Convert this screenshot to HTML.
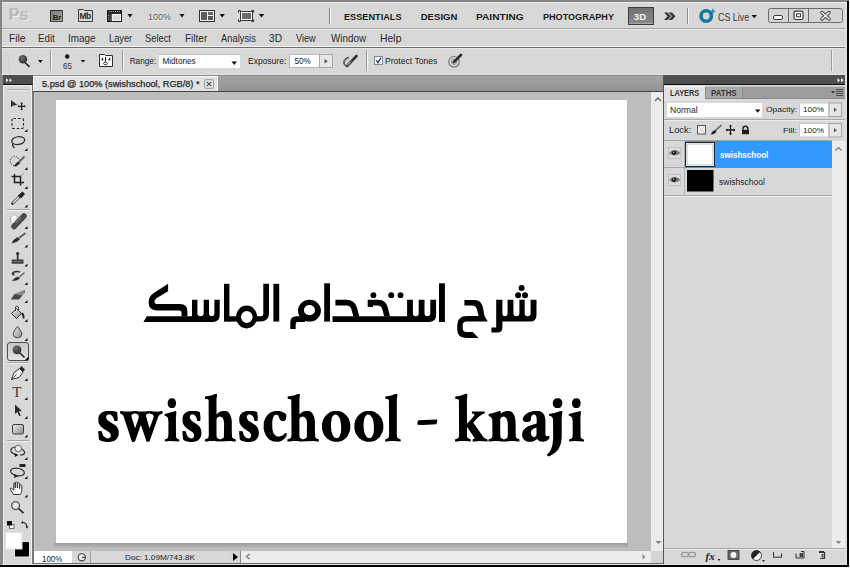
<!DOCTYPE html>
<html><head><meta charset="utf-8">
<style>
*{margin:0;padding:0;box-sizing:border-box}
html,body{width:850px;height:568px;overflow:hidden;background:#fff}
body{position:relative;font-family:"Liberation Sans",sans-serif;color:#222}
.a{position:absolute}
.t{position:absolute;white-space:nowrap;line-height:1}
.en .t{transform-origin:0 0}
</style></head><body>
<!-- frame -->
<div class="a" style="left:0;top:0;width:849px;height:567px;background:#868686"></div>
<!-- app bar -->
<div class="a" style="left:2px;top:2px;width:845px;height:26px;background:#d8d8d8;border-top:1px solid #ececec"></div>
<div class="a" style="left:2px;top:28px;width:845px;height:1px;background:#a4a4a4"></div>
<!-- menu bar -->
<div class="a" style="left:2px;top:29px;width:845px;height:18px;background:#d8d8d8;border-top:1px solid #ececec;border-bottom:1px solid #f4f4f4"></div>
<div class="a" style="left:2px;top:47px;width:845px;height:1px;background:#6e6e6e"></div>
<!-- options bar -->
<div class="a" style="left:2px;top:48px;width:845px;height:27px;background:#d8d8d8;border-top:1px solid #e6e6e6;border-bottom:1px solid #e4e4e4"></div>
<div class="a" style="left:2px;top:75px;width:845px;height:1px;background:#9a9a9a"></div>

<!-- toolbar -->
<div class="a" style="left:3px;top:75px;width:30px;height:10px;background:#4e4e4e;border-bottom:1px solid #111"></div>
<div class="a" style="left:3px;top:85px;width:29px;height:480px;background:#d8d8d8;border-left:1px solid #ececec;border-top:1px solid #f0f0f0"></div>
<div class="a" style="left:31px;top:86px;width:1px;height:478px;background:#f2f2f2"></div>
<div class="a" style="left:32px;top:85px;width:2px;height:480px;background:#787878"></div>
<div class="a" style="left:34px;top:92px;width:1px;height:459px;background:#cacaca"></div>

<!-- document window -->
<div class="a" style="left:33px;top:75px;width:630px;height:17px;background:linear-gradient(#a4a4a4,#939393);border-top:1px solid #8a8a8a;border-bottom:1px solid #444"></div>
<div class="a" style="left:33px;top:76px;width:185px;height:15px;background:#e2e2e2;border-top:1px solid #fafafa;border-left:1px solid #fafafa;border-right:1px solid #fafafa"></div>
<div class="a" style="left:35px;top:92px;width:616px;height:459px;background:#bdbdbd"></div>
<div class="a" style="left:56px;top:100px;width:571.4px;height:442.5px;background:#fff"></div>
<div class="a" style="left:54px;top:542.5px;width:574px;height:5px;background:linear-gradient(#9a9a9a,#bababa)"></div>
<div class="a" style="left:651px;top:92px;width:12px;height:459px;background:#ececec"></div>
<div class="a" style="left:663px;top:75px;width:1px;height:490px;background:#555"></div>
<!-- status bar -->
<div class="a" style="left:34px;top:551px;width:629px;height:13px;background:#d8d8d8"></div>
<div class="a" style="left:34px;top:551px;width:38px;height:13px;background:#fff"></div>
<div class="a" style="left:241px;top:551px;width:410px;height:13px;background:#ececec"></div>

<!-- right panel -->
<div class="a" style="left:664px;top:75px;width:183px;height:10px;background:#4e4e4e;border-bottom:1px solid #111"></div>
<div class="a" style="left:664px;top:85px;width:183px;height:480px;background:#d8d8d8"></div>
<div class="a" style="left:664px;top:86px;width:181px;height:13px;background:#9e9e9e"></div>
<div class="a" style="left:664px;top:86px;width:41px;height:13px;background:#e2e2e2"></div>
<div class="a" style="left:705px;top:86px;width:37px;height:13px;background:#a9a9a9;border-left:1px solid #888;border-right:1px solid #888"></div>
<div class="a" style="left:845px;top:2px;width:2px;height:563px;background:#dedede"></div>
<div class="a" style="left:847px;top:1px;width:1.6px;height:566px;background:#000"></div>
<div class="a" style="left:34px;top:563px;width:629px;height:1px;background:#6a6a6a"></div>
<div class="a" style="left:2px;top:564px;width:845px;height:1px;background:#e4e4e4"></div>
<div class="a" style="left:0;top:565px;width:848.6px;height:2px;background:#000"></div>
<!-- app bar icons -->
<div class="t" style="left:9px;top:7px;font-size:16px;font-weight:700;color:#bcbcbc;text-shadow:1px 1px 0 #f0f0f0,-0.5px -0.5px 0 #a8a8a8;letter-spacing:0px">Ps</div>
<svg class="a" style="left:0;top:0" width="850" height="30" viewBox="0 0 850 30">
 <defs>
  <linearGradient id="gbr" x1="0" y1="0" x2="1" y2="1"><stop offset="0" stop-color="#7c7c7c"/><stop offset="1" stop-color="#a4a4a4"/></linearGradient>
  <linearGradient id="g3d" x1="0" y1="0" x2="0" y2="1"><stop offset="0" stop-color="#6f6f6f"/><stop offset="1" stop-color="#8c8c8c"/></linearGradient>
 </defs>
 <!-- Br -->
 <rect x="50.5" y="10.5" width="12" height="11" fill="url(#gbr)" stroke="#4a4a4a"/>
 <path d="M50.5 21.5V10.5H62.5" fill="none" stroke="#2e2e2e"/>
 <text x="52.6" y="19.6" font-family="Liberation Sans" font-weight="700" font-size="8" fill="#1c1c1c">Br</text>
 <!-- Mb folder -->
 <path d="M78.5 21.5V9.5H83.5L84.5 10.5H92.5V21.5Z" fill="#d9d9d9" stroke="#3e3e3e"/>
 <text x="79.6" y="19.4" font-family="Liberation Sans" font-weight="700" font-size="8.5" fill="#2a2a2a" letter-spacing="-0.6">Mb</text>
 <!-- film / screen icon -->
 <rect x="107.5" y="10.5" width="14" height="11" fill="#2a2a2a" stroke="#1e1e1e"/>
 <rect x="112" y="14" width="9" height="7" fill="#f2f2f2"/>
 <rect x="113" y="15" width="7" height="5" fill="#d8d8d8"/>
 <g fill="#9a9a9a"><rect x="109" y="11" width="1" height="1"/><rect x="111" y="11" width="1" height="1"/><rect x="113" y="11" width="1" height="1"/><rect x="115" y="11" width="1" height="1"/><rect x="117" y="11" width="1" height="1"/><rect x="119" y="11" width="1" height="1"/><rect x="108" y="15" width="1" height="1"/><rect x="108" y="17" width="1" height="1"/><rect x="108" y="19" width="1" height="1"/></g>
 <rect x="110" y="14" width="2" height="7" fill="#555"/>
 <!-- dropdown arrows -->
 <g fill="#111">
  <path d="M127.5 14H132.5L130 17.5Z"/>
  <path d="M179.5 14H184.5L182 17.5Z"/>
  <path d="M219.5 14H225L222.2 17.5Z"/>
  <path d="M258.7 14H264.2L261.5 17.5Z"/>
  <path d="M751.5 15H757L754.2 18.2Z"/>
 </g>
 <!-- arrange docs icon -->
 <rect x="199.5" y="10.5" width="15" height="11" fill="#f0f0f0" stroke="#2c2c2c"/>
 <rect x="201" y="12" width="6" height="8" fill="#5e5e5e"/>
 <rect x="208" y="12" width="5" height="3" fill="#6a6a6a"/>
 <rect x="208" y="16" width="5" height="4" fill="#5a5a5a"/>
 <!-- screen mode icon -->
 <path d="M238.5 12.5V10.5H240.5M251.5 10.5H253.5V12.5M253.5 19.5V21.5H251.5M240.5 21.5H238.5V19.5" fill="none" stroke="#2a2a2a"/>
 <rect x="240.5" y="11.5" width="12" height="9" fill="#fafafa" stroke="#3a3a3a"/>
 <rect x="242" y="13" width="9" height="6" fill="#6c6c6c"/>
 <!-- separators -->
 <rect x="329" y="8" width="1" height="16" fill="#8a8a8a"/><rect x="330" y="8" width="1" height="16" fill="#f4f4f4"/>
 <rect x="687" y="8" width="1" height="16" fill="#8a8a8a"/><rect x="688" y="8" width="1" height="16" fill="#f4f4f4"/>
 <!-- 3D button -->
 <rect x="628.5" y="7.5" width="25" height="17" fill="url(#g3d)" stroke="#3c3c3c"/>
 <rect x="629" y="23" width="24" height="1" fill="#a8a8a8"/>
 <!-- >> -->
 <path d="M664 12.5L667.5 12.5L671 16.2L667.5 20L664 20L667.5 16.2Z M668.5 12.5L672 12.5L675.5 16.2L672 20L668.5 20L672 16.2Z" fill="#3a3a3a"/>
 <!-- CS live icon -->
 <circle cx="706.2" cy="16" r="5.2" fill="none" stroke="#17789e" stroke-width="3.6"/>
 <path d="M712.8 8.8V13.8M710.3 11.3H715.3" stroke="#2a80a8" stroke-width="1.3"/>
 <!-- window buttons -->
 <rect x="768.5" y="8.5" width="74" height="14" rx="2" fill="#d4d4d4" stroke="#6a6a6a"/>
 <rect x="788" y="9" width="1" height="13" fill="#6a6a6a"/>
 <rect x="808" y="9" width="1" height="13" fill="#6a6a6a"/>
 <rect x="773.5" y="15.5" width="9" height="4" rx="1.5" fill="#fafafa" stroke="#3a3a3a"/>
 <rect x="794" y="11.2" width="9" height="8.3" rx="1.5" fill="#fafafa" stroke="#3a3a3a" stroke-width="1.2"/>
 <rect x="796.5" y="13.8" width="4" height="3" fill="#fafafa" stroke="#3a3a3a"/>
 <path d="M822 12.5L829 19M829 12.5L822 19" stroke="#3a3a3a" stroke-width="3.4" stroke-linecap="round"/>
 <path d="M822 12.5L829 19M829 12.5L822 19" stroke="#fafafa" stroke-width="1.6" stroke-linecap="round"/>
</svg>
<!-- options bar -->
<svg class="a" style="left:0;top:46px" width="850" height="32" viewBox="0 46 850 32">
 <defs>
  <radialGradient id="gdot"><stop offset="0" stop-color="#000"/><stop offset="0.6" stop-color="#222"/><stop offset="1" stop-color="#222" stop-opacity="0"/></radialGradient>
  <radialGradient id="gball" cx="0.4" cy="0.35" r="0.7"><stop offset="0" stop-color="#6a6a6a"/><stop offset="1" stop-color="#2e2e2e"/></radialGradient>
 </defs>
 <!-- gripper -->
 <g fill="#c2c2c2"><rect x="6" y="52" width="1" height="1"/><rect x="6" y="55" width="1" height="1"/><rect x="6" y="58" width="1" height="1"/><rect x="6" y="61" width="1" height="1"/><rect x="6" y="64" width="1" height="1"/><rect x="6" y="67" width="1" height="1"/><rect x="8" y="53" width="1" height="1"/><rect x="8" y="56" width="1" height="1"/><rect x="8" y="59" width="1" height="1"/><rect x="8" y="62" width="1" height="1"/><rect x="8" y="65" width="1" height="1"/><rect x="8" y="68" width="1" height="1"/></g>
 <!-- dodge tool icon -->
 <path d="M25 62.5L29.5 66.8" stroke="#1e1e1e" stroke-width="1.6"/>
 <circle cx="22.9" cy="59.3" r="4.3" fill="url(#gball)"/>
 <g fill="#111">
  <path d="M38 60H42.8L40.4 63Z"/>
  <path d="M80.7 60H85.2L83 62.6Z"/>
 </g>
 <!-- separators -->
 <rect x="50" y="50" width="1" height="21" fill="#9c9c9c"/><rect x="51" y="50" width="1" height="21" fill="#f2f2f2"/>
 <rect x="122" y="50" width="1" height="21" fill="#9c9c9c"/><rect x="123" y="50" width="1" height="21" fill="#f2f2f2"/>
 <rect x="366" y="50" width="1" height="21" fill="#9c9c9c"/><rect x="367" y="50" width="1" height="21" fill="#f2f2f2"/>
 <rect x="831" y="50" width="1" height="21" fill="#9c9c9c"/><rect x="832" y="50" width="1" height="21" fill="#f2f2f2"/>
 <!-- brush dot -->
 <circle cx="67.2" cy="56.5" r="2.8" fill="url(#gdot)"/>
 <!-- brush panel icon -->
 <path d="M99.5 66.5V54.5H104.5L105.5 55.5H112.5V66.5Z" fill="#fbfbfb" stroke="#2e2e2e"/>
 <path d="M105.5 57V62" stroke="#222" stroke-width="1"/>
 <ellipse cx="105.5" cy="63.5" rx="1.9" ry="1.2" fill="#fff" stroke="#222" stroke-width="0.9"/>
 <path d="M101.2 60.2L102.4 57.2L103.6 60.2Z M108.2 60.2L109.4 57.2L110.6 60.2Z" fill="#1a1a1a"/>
 <!-- range dropdown -->
 <rect x="159" y="55" width="81" height="13" fill="#fff"/>
 <rect x="159" y="54" width="81" height="1" fill="#bdbdbd"/>
 <path d="M231.5 61.5H237L234.2 65Z" fill="#111"/>
 <!-- exposure field -->
 <rect x="289.5" y="54.5" width="30" height="13" fill="#fff" stroke="#b8b8b8"/>
 <rect x="319.5" y="54.5" width="13" height="13" fill="#e8e8e8" stroke="#a8a8a8"/>
 <path d="M324.5 59V63.5L327.8 61.2Z" fill="#4e5566"/>
 <!-- airbrush icon -->
 <path d="M349 57.5Q343.5 59 344 63.5Q345 66 347.5 66" fill="none" stroke="#6a6a6a" stroke-width="2"/>
 <path d="M347 66L356.5 56" stroke="#333" stroke-width="2.6" stroke-linecap="round"/>
 <path d="M347 65.5L351 61.5" stroke="#f4f4f4" stroke-width="0.9"/>
 <!-- checkbox -->
 <rect x="374.5" y="56.5" width="8" height="8" fill="#f6f6f6" stroke="#8a8a8a"/>
 <path d="M376.2 60.2L378 62.8L381 57.6" fill="none" stroke="#2a3a6a" stroke-width="1.3"/>
 <!-- protect tones / pressure icon -->
 <circle cx="454" cy="61.8" r="5.3" fill="none" stroke="#777" stroke-width="1.2"/>
 <circle cx="454" cy="61.8" r="2.6" fill="none" stroke="#888" stroke-width="1"/>
 <path d="M453.8 62.2L461 55" stroke="#2a2a2a" stroke-width="2.6" stroke-linecap="round"/>
</svg>
<!-- toolbar icons -->
<svg class="a" style="left:0;top:75px" width="34" height="492" viewBox="0 75 34 492">
 <defs>
  <linearGradient id="gdk" x1="0" y1="0" x2="1" y2="1"><stop offset="0" stop-color="#7a7a7a"/><stop offset="1" stop-color="#2e2e2e"/></linearGradient>
  <linearGradient id="glt" x1="0" y1="0" x2="1" y2="1"><stop offset="0" stop-color="#f0f0f0"/><stop offset="1" stop-color="#8a8a8a"/></linearGradient>
  <linearGradient id="gsel" x1="0" y1="0" x2="0" y2="1"><stop offset="0" stop-color="#c4c4c4"/><stop offset="1" stop-color="#e6e6e6"/></linearGradient>
 </defs>
 <!-- header arrows -->
 <path d="M6 78V82.5L8.5 80.2Z M9.5 78V82.5L12 80.2Z" fill="#e6e6e6"/>
 <!-- gripper -->
 <g fill="#b0b0b0"><rect x="7" y="89" width="22" height="1"/></g>
 <g fill="#e8e8e8"><rect x="7" y="90" width="22" height="1"/></g>
 <!-- separators -->
 <g fill="#a6a6a6"><rect x="7" y="209" width="22" height="1"/><rect x="7" y="362" width="22" height="1"/><rect x="7" y="440" width="22" height="1"/></g>
 <g fill="#efefef"><rect x="7" y="210" width="22" height="1"/><rect x="7" y="363" width="22" height="1"/><rect x="7" y="441" width="22" height="1"/></g>
 <!-- small corner triangles -->
 <g fill="#111">
  <path d="M24.5 132H27.5V129Z"/><path d="M24.5 151H27.5V148Z"/><path d="M24.5 170H27.5V167Z"/><path d="M24.5 189H27.5V186Z"/><path d="M24.5 207.5H27.5V204.5Z"/>
  <path d="M24.5 229H27.5V226Z"/><path d="M24.5 247.5H27.5V244.5Z"/><path d="M24.5 266.5H27.5V263.5Z"/><path d="M24.5 285H27.5V282Z"/><path d="M24.5 303H27.5V300Z"/><path d="M24.5 322H27.5V319Z"/><path d="M24.5 341H27.5V338Z"/>
  <path d="M24.5 381H27.5V378Z"/><path d="M24.5 400H27.5V397Z"/><path d="M24.5 419H27.5V416Z"/><path d="M24.5 437.5H27.5V434.5Z"/>
  <path d="M24.5 460H27.5V457Z"/><path d="M24.5 479H27.5V476Z"/><path d="M24.5 497.5H27.5V494.5Z"/>
 </g>
 <!-- move -->
 <path d="M11 100V107.5L13 105.5L17.5 105Z" fill="#333"/>
 <path d="M18 106.3H25.2M21.6 102.7V110" stroke="#222" stroke-width="1.3"/>
 <path d="M17.5 106.3L19 105V107.6Z M25.7 106.3L24.2 105V107.6Z M21.6 102.2L20.3 103.7H22.9Z M21.6 110.5L20.3 109H22.9Z" fill="#222"/>
 <!-- marquee -->
 <rect x="12" y="118.5" width="11.5" height="10" rx="1.5" fill="none" stroke="#222" stroke-width="1.1" stroke-dasharray="2.5 2"/>
 <!-- lasso -->
 <ellipse cx="18.2" cy="140.6" rx="6.5" ry="3.9" fill="none" stroke="#2a2a2a" stroke-width="1.2" transform="rotate(-8 18.2 140.6)"/>
 <path d="M12.8 143.5Q12 146 14.5 148" fill="none" stroke="#2a2a2a" stroke-width="1.3"/>
 <!-- quick selection -->
 <circle cx="14.8" cy="161" r="4.6" fill="none" stroke="#333" stroke-width="1" stroke-dasharray="1.3 1.2"/>
 <path d="M13.5 166L18 161.5L20.5 163L16 166.5Z" fill="#2a2a2a"/>
 <path d="M19 162L24.5 156.5" stroke="#666" stroke-width="2"/>
 <!-- crop -->
 <path d="M14.5 174V182.5H24M11.5 176.5H20.5V185.5" fill="none" stroke="#1e1e1e" stroke-width="1.5"/>
 <path d="M20.5 176.5L23.5 173.5" stroke="#777" stroke-width="0.8"/>
 <!-- eyedropper -->
 <path d="M12.5 203.5L19.5 196.5" stroke="#333" stroke-width="2.8" stroke-linecap="round"/>
 <path d="M13 203L19 197" stroke="#f4f4f4" stroke-width="1.2"/>
 <path d="M18 195.5L22.5 191.5L25 194L21 198.5Z" fill="#222"/>
 <!-- healing -->
 <path d="M10.5 219Q11 214 15 215L18 217L14 224Q10.5 223 10.5 219Z" fill="#f6f6f6" stroke="#555" stroke-width="0.7" stroke-dasharray="1 1"/>
 <path d="M14 226.5L24 216" stroke="#4a4a4a" stroke-width="5.5" stroke-linecap="round"/>
 <path d="M15.5 223L21 217.5" stroke="#7a7a7a" stroke-width="1.2"/>
 <!-- brush -->
 <path d="M11.5 243.5Q13.5 239 17.5 237L20 239.5Q17 242.5 11.5 243.5Z" fill="#2e2e2e"/>
 <path d="M19 238L25.5 233" stroke="#555" stroke-width="1.6"/>
 <!-- stamp -->
 <circle cx="17.6" cy="253.6" r="1.7" fill="#3a3a3a"/>
 <rect x="16.8" y="254.5" width="1.8" height="5.5" fill="#3a3a3a"/>
 <rect x="11.7" y="259.5" width="11.8" height="4.2" fill="#3a3a3a"/>
 <rect x="12.5" y="261" width="10" height="1" fill="#777"/>
 <!-- history brush -->
 <path d="M12 273.5Q15 270.5 20 272" fill="none" stroke="#333" stroke-width="1.4"/>
 <path d="M11.5 275L14 272L14.5 275.5Z" fill="#333"/>
 <path d="M12 281Q14 277.5 18 276.5L20 278.5Q17 281 12 281Z" fill="#2e2e2e"/>
 <path d="M19.5 277L24.5 272.5" stroke="#666" stroke-width="1.4"/>
 <!-- eraser -->
 <path d="M11 299.5L14.5 294L25 289.5L22.5 295.5Z" fill="#8c8c8c"/>
 <path d="M11 299.5L14.5 294L22.5 295.5L19 299.5Z" fill="#4a4a4a"/>
 <path d="M22.5 295.5L25 289.5L25 292Z" fill="#555"/>
 <!-- paint bucket -->
 <path d="M11.5 313.5L16.5 308.5L21.5 313.5L16.5 318.5Z" fill="url(#glt)" stroke="#3a3a3a" stroke-width="1"/>
 <path d="M15.5 311V307Q17 305 18.5 307V311" fill="none" stroke="#444" stroke-width="1"/>
 <path d="M21.5 313.5Q24 314 23.5 318.5" fill="none" stroke="#222" stroke-width="1.8"/>
 <!-- blur drop -->
 <path d="M17.5 326.5Q13 332 13.2 334.5Q13.5 337.8 17.5 337.8Q21.5 337.8 21.8 334.5Q22 332 17.5 326.5Z" fill="url(#glt)" stroke="#3c3c3c" stroke-width="0.9"/>
 <!-- selected button -->
 <rect x="7.5" y="342.5" width="21" height="18" rx="2.5" fill="url(#gsel)" stroke="#4e4e4e"/>
 <path d="M19.5 352.5L24.5 357.5" stroke="#1e1e1e" stroke-width="1.6"/>
 <circle cx="17" cy="349.8" r="4.4" fill="url(#gball)"/>
 <path d="M24.5 360.5H28.5V356.5Z" fill="#111"/>
 <!-- pen -->
 <path d="M11.5 379.5L14 372.5L19.5 368.5L23 372L19 377.5Z" fill="#f4f4f4" stroke="#333" stroke-width="1"/>
 <path d="M19.5 368.5L21.5 366L25 369.5L23 372Z" fill="#2a2a2a"/>
 <path d="M11.5 379.5L16.5 374.5" stroke="#333" stroke-width="0.8"/>
 <!-- type -->
 <text x="12.2" y="397" font-family="Liberation Serif" font-size="15" fill="#3a3a3a">T</text>
 <!-- path selection -->
 <path d="M15 404.5V414L17.3 412L19.3 416.2L20.8 415.4L18.9 411.3L22 411Z" fill="#2a2a2a"/>
 <!-- shape -->
 <rect x="12.5" y="424.5" width="11" height="9.5" rx="1.5" fill="url(#glt)" stroke="#3c3c3c"/>
 <!-- 3D rotate -->
 <circle cx="18.3" cy="448.5" r="3.2" fill="#f0f0f0" stroke="#555" stroke-width="0.9"/>
 <path d="M15 447Q10 448 11 451.5Q13 454.5 17 455M20 455Q25 455 24.5 452Q24 450 21.5 449" fill="none" stroke="#2e2e2e" stroke-width="1.2"/>
 <path d="M14.5 453L18.5 455L15 457Z" fill="#1e1e1e"/>
 <!-- 3D orbit cam -->
 <rect x="19.5" y="464" width="6" height="3" fill="#222"/>
 <ellipse cx="17.5" cy="472" rx="7" ry="3.8" fill="none" stroke="#2e2e2e" stroke-width="1.2" transform="rotate(10 17.5 472)"/>
 <path d="M14 474L18.5 476L14.5 478Z" fill="#1e1e1e"/>
 <!-- hand -->
 <path d="M13.5 494.5L10.5 489.5Q10 488 11.5 488.2L13.8 490V484Q14 482.5 15.2 483V488V482.5Q16.2 481.2 17.4 482.5V488V483Q18.6 482 19.6 483.3V488.5V485.2Q20.8 484.2 21.8 485.5V490.5Q21.5 493 20.2 494.5Z" fill="#fafafa" stroke="#333" stroke-width="1"/>
 <!-- zoom -->
 <circle cx="15.6" cy="505.6" r="3.9" fill="#e6e6e6" stroke="#333" stroke-width="1.1"/>
 <path d="M18.5 508.5L23.5 513.2" stroke="#222" stroke-width="1.6"/>
 <!-- default colors -->
 <rect x="9.5" y="524.5" width="4.5" height="4" fill="#fff" stroke="#555" stroke-width="0.8"/>
 <rect x="7" y="521" width="5" height="4.5" fill="#111"/>
 <!-- swap -->
 <path d="M22.5 522.5Q26.5 522.5 27 527" fill="none" stroke="#222" stroke-width="1.1"/>
 <path d="M21 522.5L23 521V524Z M27 528.8L25.5 526.5H28.5Z" fill="#222"/>
 <!-- bg/fg colors -->
 <rect x="14.5" y="541.5" width="15" height="15.5" fill="#000" stroke="#e8e8e8"/>
 <rect x="5.5" y="532.5" width="16.5" height="16.5" fill="#fff" stroke="#e0e0e0"/>
</svg>
<!-- document widgets -->
<svg class="a" style="left:30px;top:74px" width="636" height="494" viewBox="30 74 636 494">
 <!-- tab close -->
 <rect x="204.5" y="79.5" width="9" height="9" rx="1.5" fill="#dedede" stroke="#a6a6a6"/>
 <path d="M206.8 81.8L211.2 86.2M211.2 81.8L206.8 86.2" stroke="#555" stroke-width="1.1"/>
 <!-- v scrollbar arrows -->
 <path d="M655 101L658 98L661 101" fill="none" stroke="#5e5e5e" stroke-width="1.3"/>
 <path d="M655.5 541H661.5L658.5 544Z" fill="#7a7a7a"/>
 <!-- status icon button -->
 <rect x="72" y="551" width="18" height="12" fill="#d8d8d8"/>
 <rect x="90" y="551" width="1" height="12" fill="#a0a0a0"/>
 <circle cx="81.8" cy="557.3" r="3.6" fill="#f0f0f0" stroke="#444" stroke-width="1.1"/>
 <path d="M81.8 557.3H85.5" stroke="#333" stroke-width="1.1"/>
 <!-- status play arrow -->
 <rect x="229.5" y="551" width="11" height="12" fill="#d6d6d6"/>
 <rect x="240" y="551" width="1" height="12" fill="#8a8a8a"/>
 <path d="M233 553V561L238 557Z" fill="#000"/>
 <!-- h scrollbar left arrow -->
 <path d="M249.5 554L246.5 556.5L249.5 559" fill="none" stroke="#777" stroke-width="1.2"/>
 <path d="M642.5 554V559.5L645.5 556.7Z" fill="#8a8a8a"/>
 <rect x="651" y="551" width="12" height="12" fill="#d4d4d4"/>
 <!-- status bottom lines -->
</svg>
<!-- right panel widgets -->
<svg class="a" style="left:662px;top:74px" width="188" height="494" viewBox="662 74 188 494">
 <defs>
  <linearGradient id="geye" x1="0" y1="0" x2="0" y2="1"><stop offset="0" stop-color="#5a5a5a"/><stop offset="1" stop-color="#9a9a9a"/></linearGradient>
 </defs>
 <!-- header arrows -->
 <path d="M837.5 78V82.5L840.2 80.2Z M841 78V82.5L843.7 80.2Z" fill="#e8e8e8"/>
 <!-- tab bar -->
 <rect x="664" y="86" width="181" height="1" fill="#c4c4c4"/>
 <rect x="664" y="98" width="181" height="1" fill="#8a8a8a"/>
 <rect x="664" y="86" width="41" height="15" fill="#e2e2e2"/>
 <rect x="664" y="86" width="41" height="1" fill="#f6f6f6"/>
 <rect x="705" y="87" width="1" height="11" fill="#8c8c8c"/>
 <rect x="742" y="87" width="1" height="11" fill="#8c8c8c"/>
 <rect x="706" y="87" width="36" height="11" fill="#a9a9a9"/>
 <!-- panel menu icon -->
 <path d="M830.8 91H835.2L833 93.5Z" fill="#333"/>
 <g fill="#4a4a4a"><rect x="836" y="89" width="7" height="1"/><rect x="836" y="91" width="7" height="1"/><rect x="836" y="93" width="7" height="1"/><rect x="836" y="95" width="7" height="1"/></g>
 <!-- blend dropdown -->
 <rect x="667" y="103" width="95" height="14" fill="#fff"/>
 <path d="M755 109.5H760.5L757.7 112.8Z" fill="#111"/>
 <!-- opacity field -->
 <rect x="799.5" y="103" width="29.5" height="13.5" fill="#fff" stroke="#c8c8c8"/>
 <rect x="829" y="103" width="12.5" height="13.5" fill="#e6e6e6" stroke="#a4a4a4"/>
 <path d="M834 107.5V112L837 109.8Z" fill="#555a66"/>
 <!-- separator -->
 <rect x="664" y="119" width="181" height="1" fill="#a9a9a9"/>
 <rect x="664" y="120" width="181" height="1" fill="#ececec"/>
 <!-- lock icons -->
 <rect x="697.5" y="125.5" width="8" height="8.5" fill="#f4f4f4" stroke="#555"/>
 <path d="M699 127L704 132.5M704 127L699 132.5" stroke="#c8c8c8" stroke-width="1"/>
 <path d="M711 134.5Q711.5 131 715 130L716.5 131.5Q715 134.5 711 134.5Z" fill="#222"/>
 <path d="M715.5 130.5L721.5 125" stroke="#555" stroke-width="1.4"/>
 <path d="M726 130H735M730.5 125.2V134.8" stroke="#1e1e1e" stroke-width="1.3"/>
 <path d="M725.5 130L727.5 128.5V131.5Z M735.5 130L733.5 128.5V131.5Z M730.5 124.5L729 126.5H732Z M730.5 135.3L729 133.3H732Z" fill="#1e1e1e"/>
 <path d="M743 130V128.5Q743 126.3 745.4 126.3Q747.8 126.3 747.8 128.5V130" fill="none" stroke="#222" stroke-width="1.4"/>
 <rect x="742" y="129.8" width="7" height="4.4" fill="#1e1e1e"/>
 <!-- fill field -->
 <rect x="799.5" y="123.5" width="29.5" height="13.5" fill="#fff" stroke="#c8c8c8"/>
 <rect x="829" y="123.5" width="12.5" height="13.5" fill="#e6e6e6" stroke="#a4a4a4"/>
 <path d="M834 128V132.5L837 130.3Z" fill="#555a66"/>
 <!-- layers list -->
 <rect x="664" y="140" width="168" height="1" fill="#a4a4a4"/>
 <rect x="685" y="141" width="147" height="27" fill="#3199fb"/>
 <rect x="684" y="141" width="1" height="54" fill="#b0b0b0"/>
 <rect x="664" y="167" width="20" height="1" fill="#a8a8a8"/>
 <rect x="664" y="195" width="168" height="1" fill="#a8a8a8"/>
 <rect x="664" y="196" width="168" height="1" fill="#f0f0f0"/>
 <!-- eye boxes -->
 <rect x="668.5" y="147.5" width="12" height="11" fill="#dcdcdc" stroke="#b8b8b8" stroke-width="0.8"/>
 <rect x="668.5" y="174.5" width="12" height="11" fill="#dcdcdc" stroke="#b8b8b8" stroke-width="0.8"/>
 <path d="M669 153Q674.5 147.2 680.5 153Q674.5 158.6 669 153Z" fill="url(#geye)"/>
 <circle cx="674" cy="152.8" r="2.1" fill="#0c0c0c"/><rect x="673" y="151.6" width="1.2" height="1.2" fill="#fff"/>
 <path d="M669 180Q674.5 174.2 680.5 180Q674.5 185.6 669 180Z" fill="url(#geye)"/>
 <circle cx="674" cy="179.8" r="2.1" fill="#0c0c0c"/><rect x="673" y="178.6" width="1.2" height="1.2" fill="#fff"/>
 <!-- thumbnails -->
 <rect x="685.5" y="142.5" width="29" height="24" fill="#fff" stroke="#1e2a44"/>
 <rect x="687" y="144" width="26" height="21" fill="#fdfdfd" stroke="#9a9a9a" stroke-width="0.6"/>
 <rect x="687" y="170" width="26.5" height="21.5" fill="#000"/>
 <!-- scrollbar -->
 <rect x="832" y="141" width="13" height="407" fill="#ececec"/>
 <path d="M835.5 150.5L838.5 147.5L841.5 150.5" fill="none" stroke="#777" stroke-width="1.1"/>
 <path d="M835.5 541L841.5 541L838.5 544Z" fill="#8a8a8a"/>
 <!-- bottom bar -->
 <rect x="664" y="548" width="181" height="1" fill="#a8a8a8"/>
 <rect x="664" y="549" width="181" height="1" fill="#ececec"/>
 <!-- link -->
 <g fill="none" stroke="#9a9a9a" stroke-width="1.3"><rect x="681.5" y="552.3" width="7" height="4.4" rx="2.2"/><rect x="688.5" y="552.3" width="7" height="4.4" rx="2.2"/></g>
 <!-- fx -->
 <text x="705.5" y="559.5" font-family="Liberation Serif" font-style="italic" font-weight="700" font-size="11" fill="#222">fx</text>
 <path d="M717.5 559H720.5L719 561Z" fill="#222"/>
 <!-- mask -->
 <rect x="728" y="550.5" width="11" height="9" fill="#6a6a6a" stroke="#333" stroke-width="0.8"/>
 <circle cx="733.5" cy="555" r="2.9" fill="#f8f8f8"/>
 <!-- adjustment -->
 <circle cx="756.5" cy="555.5" r="5" fill="#f4f4f4" stroke="#333" stroke-width="0.9"/>
 <path d="M752.9 559.1A5 5 0 0 1 760.1 551.9Z" fill="#222"/>
 <path d="M762 560H765L763.5 562Z" fill="#222"/>
 <!-- group folder -->
 <path d="M773.5 552V557.5H781.5V553.5" fill="none" stroke="#333" stroke-width="1"/>
 <rect x="774" y="556.5" width="7.5" height="1.5" fill="#666"/>
 <!-- new layer -->
 <path d="M796 553.5V558H804V551.5H801" fill="none" stroke="#333" stroke-width="1"/>
 <rect x="799.5" y="553" width="3.5" height="4" fill="#444"/>
 <!-- trash -->
 <path d="M819 552.5H824.5V558.5H820" fill="none" stroke="#333" stroke-width="1.2"/>
 <rect x="819" y="551" width="5" height="1.3" fill="#333"/>
 <rect x="821.5" y="554" width="2" height="3.5" fill="#555"/>
</svg>
<!-- canvas text -->
<svg class="a" style="left:0;top:0" width="850" height="568" viewBox="0 0 850 568">
<g fill="#000">
 <!-- word 1: الماسك -->
 <rect x="273.4" y="283.8" width="5.8" height="37.8"/>
 <path d="M263.3 283.8H269V313Q269 321.6 260.4 321.6H255V316.3H261Q263.3 316.3 263.3 314Z"/>
 <path d="M246.6 305.6A10.5 11.4 0 1 1 246.6 328.4A10.5 11.4 0 1 1 246.6 305.6ZM246.8 311A5.8 6 0 1 0 246.8 323A5.8 6 0 1 0 246.8 311Z" fill-rule="evenodd"/>
 <rect x="228" y="316.3" width="10" height="5.3"/>
 <rect x="224" y="283.8" width="5.4" height="37.8"/>
 <path d="M192 299.8H197.4V313.3Q197.4 316.3 200.4 316.3Q203.7 316.3 203.7 313.3V299.8H209V313.3Q209 316.3 211.6 316.3Q214.4 316.3 214.4 313.3V299.8H219.7V315Q219.7 322 212.7 322H146.6L143.4 322L146.8 316.2H192Z"/>
 <path d="M168.1 283.8V291.2L156.5 298.2Q154.5 299.6 154.5 301.5Q154.5 304.1 158 304.1H180.2Q187.4 304.1 187.4 311.3V316.5H181.5V312.5Q181.5 310.4 179.2 310.4H156.5Q148.6 310.4 148.6 302Q148.6 296.8 153.5 293.3Z"/>
 <!-- word 2: استخدام -->
 <rect x="439" y="283.3" width="5.9" height="38.7"/>
 <path d="M407.1 299.8H412.9V313.3Q412.9 316.2 415.8 316.2Q418.7 316.2 418.7 313.3V299.8H424.5V313.3Q424.5 316.2 427.4 316.2Q430.3 316.2 430.3 313.3V299.8H436.1V315Q436.1 322 429.1 322H332.5V316.2H407.1Z"/>
 <circle cx="391.2" cy="295.2" r="2.9"/><circle cx="400.5" cy="295.2" r="2.9"/>
 <path d="M367.7 299.8H378.5Q385.8 299.8 387.8 307.5L390 316.5H384.2L382.4 309.5Q381.4 305.5 377.5 305.5H373V307H367.7Z"/>
 <circle cx="373.4" cy="295.2" r="2.9"/>
 <path d="M335.4 299.8H346.5Q354.5 299.8 357 307.5L359.2 316.5H353.4L351.6 310Q350.6 305.6 346.3 305.6H335.4Z"/>
 <rect x="324.2" y="283.3" width="5.8" height="38.3"/>
 <path d="M309.45 299.8A11.45 10.9 0 1 1 309.45 321.6A11.45 10.9 0 1 1 309.45 299.8ZM309.45 305.1A5.55 5.1 0 1 0 309.45 315.3A5.55 5.1 0 1 0 309.45 305.1Z" fill-rule="evenodd"/>
 <path d="M305 316.3V322H297.5Q295.7 322 295.7 324V328.9H290.3V322.5Q290.3 316.3 296.5 316.3Z"/>
 <!-- word 3: شرح -->
 <path d="M496.2 299.8H502.4V313.3Q502.4 316.3 505 316.3Q507.6 316.3 507.6 313.3V299.8H513.4V313.3Q513.4 316.3 516.4 316.3Q519.4 316.3 519.4 313.3V299.8H524.7V313.3Q524.7 316.3 527.6 316.3Q530.6 316.3 530.6 313.3V299.8H536.5V315Q536.5 321.6 529.9 321.6H502.4V327.5Q502.4 332.6 497.3 332.6H491.4V327.4H496.2Z"/>
 <circle cx="521.6" cy="287.9" r="3"/><circle cx="518.1" cy="295.3" r="3"/><circle cx="525" cy="295.3" r="3"/>
 <path d="M464.4 299.9H475Q481 299.9 482.8 307L484.5 316L487.8 321.4H466.5Q462.7 321.4 462.7 325V328.3Q462.7 332 466.5 332H472.8L478.7 337.9H466Q457.2 337.9 457.2 329V325.5Q457.2 316 467 316H478.5L477 309.5Q476 305.4 472 305.4H464.4Z"/>
</g>
</svg>
<svg class="a" style="left:0;top:0" width="850" height="568" viewBox="0 0 850 568"><path fill="#000" fill-rule="evenodd" d="M104.2 411.4 101.3 412.8 99.1 415.3 98.3 417.9 98.5 422.4 99.1 424.0 100.9 426.6 103.6 428.7 109.2 432.2 110.8 434.6 110.6 436.9 109.0 438.3 108.0 438.5 105.4 437.8 103.1 435.5 101.7 431.3 98.7 431.0 98.3 431.3 98.3 433.6 98.9 439.2 99.5 439.9 101.3 440.9 106.0 442.1 109.6 442.1 114.1 440.9 116.7 439.0 118.3 436.2 118.7 434.3 118.7 431.5 118.3 429.6 117.3 427.5 115.7 425.6 107.8 420.5 106.2 418.1 106.2 416.3 107.2 414.9 108.0 414.4 110.6 414.6 112.8 416.7 113.9 419.1 114.1 420.5 114.5 421.0 117.5 421.0 117.7 417.7 117.1 412.1 113.2 410.9 106.0 410.9ZM120.0 411.4 120.2 413.5 121.5 413.9 123.3 415.6 131.7 441.1 132.3 442.1 134.2 442.1 135.2 441.1 140.7 425.2 141.3 425.9 146.6 441.8 149.0 441.8 149.9 440.6 158.2 416.7 159.4 415.1 162.7 413.2 162.5 411.1 157.2 411.8 149.4 411.1 149.2 412.1 148.9 411.1 145.1 411.6 139.2 411.6 134.9 411.1 134.7 411.8 134.5 411.1 130.5 411.6 124.5 411.6 121.5 411.1ZM134.7 413.2 137.6 414.2 138.3 415.1 138.7 416.5 138.7 417.9 135.2 428.0 134.5 426.6 131.4 416.3 131.4 415.3 132.1 414.4ZM149.2 412.3 149.4 413.5 152.3 414.2 153.7 416.0 153.4 418.1 149.7 428.0 149.4 427.8 146.1 416.5 146.1 415.1 147.1 413.9 148.9 413.5ZM175.7 411.1 164.7 413.9 164.5 415.6 166.8 416.5 167.9 418.1 168.4 421.7 168.4 434.1 168.0 437.6 167.0 438.8 164.8 439.5 164.8 441.6 170.4 441.1 179.2 441.6 179.4 441.1 179.2 439.5 178.2 439.2 176.7 438.3 176.0 436.9 175.9 417.4 176.4 412.1ZM169.8 398.5 168.2 400.4 167.7 402.0 167.7 404.6 168.6 406.7 170.4 408.1 173.2 408.1 174.4 407.4 175.7 405.5 176.0 404.1 176.0 402.2 175.3 400.1 174.4 398.9 173.2 398.2ZM187.9 411.4 185.3 412.8 183.2 415.3 182.5 417.9 182.7 422.4 183.2 424.0 184.9 426.6 187.4 428.7 192.6 432.2 194.1 434.6 193.9 436.9 192.4 438.3 191.5 438.5 189.0 437.8 187.0 435.5 185.7 431.3 182.9 431.0 182.5 431.3 182.5 433.6 183.1 439.2 183.6 439.9 185.3 440.9 189.6 442.1 193.0 442.1 197.1 440.9 199.5 439.0 201.0 436.2 201.4 434.3 201.4 431.5 201.0 429.6 200.1 427.5 198.6 425.6 191.3 420.5 189.8 418.1 189.8 416.3 190.7 414.9 191.5 414.4 193.9 414.6 196.0 416.7 196.9 419.1 197.1 420.5 197.5 421.0 200.3 421.0 200.5 417.7 199.9 412.1 196.4 410.9 189.6 410.9ZM205.0 396.6 205.2 398.9 207.2 398.9 208.1 399.4 208.6 400.3 208.8 434.6 208.5 437.4 207.7 438.3 205.7 439.2 204.8 439.2 204.8 441.6 207.4 441.6 209.7 441.1 214.5 441.1 217.6 441.6 230.9 441.1 233.2 441.6 235.8 441.6 235.6 439.2 233.8 438.8 232.1 437.4 231.8 431.7 231.8 421.0 231.2 417.4 229.9 414.2 227.9 411.8 225.5 410.9 223.0 410.9 220.4 411.6 218.0 413.0 216.9 414.2 216.5 413.9 216.5 399.2 217.1 394.5 216.7 394.0 214.9 394.0 211.2 395.4ZM219.7 416.5 221.5 417.0 223.0 418.6 223.7 420.5 224.1 422.8 223.9 437.1 223.3 438.1 220.2 439.5 217.6 438.3 216.9 437.4 216.5 435.0 216.5 418.9 217.6 417.2ZM244.8 411.4 242.1 412.8 240.0 415.3 239.2 417.9 239.4 422.4 240.0 424.0 241.7 426.6 244.2 428.7 249.7 432.2 251.2 434.6 251.0 436.9 249.5 438.3 248.5 438.5 246.0 437.8 243.9 435.5 242.5 431.3 239.6 431.0 239.2 431.3 239.2 433.6 239.8 439.2 240.4 439.9 242.1 440.9 246.6 442.1 250.1 442.1 254.3 440.9 256.9 439.0 258.4 436.2 258.8 434.3 258.8 431.5 258.4 429.6 257.4 427.5 255.9 425.6 248.3 420.5 246.8 418.1 246.8 416.3 247.7 414.9 248.5 414.4 251.0 414.6 253.2 416.7 254.1 419.1 254.3 420.5 254.7 421.0 257.6 421.0 257.8 417.7 257.2 412.1 253.6 410.9 246.6 410.9ZM275.1 410.9 271.4 412.1 269.5 413.2 267.4 415.1 265.7 417.4 264.4 420.3 263.8 422.4 263.6 428.5 264.4 432.0 265.9 435.5 267.8 438.1 269.5 439.7 273.3 441.6 278.5 441.8 281.4 440.9 284.4 438.8 286.5 436.0 286.7 433.6 286.3 433.1 285.4 433.1 282.9 435.3 279.8 436.4 277.2 436.4 275.1 435.3 273.3 432.7 272.4 428.9 272.2 422.8 272.8 418.6 273.3 417.0 274.5 415.3 276.4 414.4 278.3 415.6 279.4 418.4 280.6 420.3 281.5 421.0 284.2 421.0 285.0 420.5 285.9 418.9 286.3 417.2 286.3 414.6 284.6 413.0 281.4 411.4 279.4 410.9ZM287.6 396.6 287.8 398.9 289.8 398.9 290.8 399.4 291.3 400.3 291.5 434.6 291.1 437.4 290.4 438.3 288.3 439.2 287.4 439.2 287.4 441.6 290.0 441.6 292.4 441.1 297.3 441.1 300.5 441.6 314.0 441.1 316.4 441.6 319.0 441.6 318.8 439.2 316.9 438.8 315.3 437.4 314.9 431.7 314.9 421.0 314.3 417.4 313.0 414.2 311.0 411.8 308.5 410.9 305.9 410.9 303.3 411.6 300.9 413.0 299.7 414.2 299.4 413.9 299.4 399.2 299.9 394.5 299.6 394.0 297.7 394.0 293.9 395.4ZM302.5 416.5 304.4 417.0 305.9 418.6 306.7 420.5 307.0 422.8 306.8 437.1 306.3 438.1 303.1 439.5 300.5 438.3 299.7 437.4 299.4 435.0 299.4 418.9 300.5 417.2ZM330.6 411.8 326.8 414.4 324.6 417.0 322.8 420.5 322.0 424.0 322.0 428.7 323.0 432.7 324.6 435.7 327.0 438.5 330.2 440.6 333.8 441.8 338.5 441.8 341.7 440.9 344.1 439.5 346.5 437.4 347.7 435.7 349.1 433.1 349.9 430.8 350.3 428.7 350.3 424.0 348.9 419.1 347.7 417.0 345.5 414.4 341.7 411.8 338.5 410.9 333.8 410.9ZM335.2 414.4 337.3 415.1 339.3 417.4 340.3 420.0 341.1 425.4 341.1 431.0 340.5 434.1 339.1 436.9 338.1 437.8 336.9 438.3 334.4 437.4 332.4 434.6 331.4 430.8 331.0 426.6 331.0 423.1 331.8 418.1 332.4 416.7 333.8 415.1ZM363.2 411.8 359.3 414.4 357.1 417.0 355.2 420.5 354.4 424.0 354.4 428.7 355.4 432.7 357.1 435.7 359.5 438.5 362.8 440.6 366.5 441.8 371.2 441.8 374.5 440.9 376.9 439.5 379.4 437.4 380.6 435.7 382.1 433.1 382.9 430.8 383.3 428.7 383.3 424.0 381.9 419.1 380.6 417.0 378.4 414.4 374.5 411.8 371.2 410.9 366.5 410.9ZM367.9 414.4 370.0 415.1 372.0 417.4 373.1 420.0 373.9 425.4 373.9 431.0 373.3 434.1 371.8 436.9 370.8 437.8 369.6 438.3 367.1 437.4 365.1 434.6 364.0 430.8 363.6 426.6 363.6 423.1 364.4 418.1 365.1 416.7 366.5 415.1ZM397.0 394.0 395.1 394.0 391.5 395.4 385.3 396.6 385.5 398.9 387.5 398.9 388.4 399.4 388.9 400.3 389.1 434.6 388.7 437.4 388.0 438.3 386.0 439.2 385.1 439.2 385.1 441.6 387.6 441.6 390.0 441.1 395.7 441.1 398.2 441.6 400.8 441.3 400.6 439.2 399.9 439.2 397.7 438.1 397.2 437.4 396.8 435.0 396.8 399.9 397.3 395.9 397.3 394.5ZM437.3 420.1 436.7 419.4 418.2 420.3 417.4 422.6 417.4 424.8 423.4 425.0 436.2 424.3 437.0 422.6ZM455.2 396.6 455.4 398.9 457.4 398.9 458.3 399.4 458.9 400.3 459.1 434.6 458.7 437.4 458.0 438.3 455.9 439.2 455.0 439.2 455.0 441.6 457.6 441.6 460.0 441.1 465.7 441.1 470.7 441.6 470.7 439.2 470.0 439.2 467.8 438.1 467.0 436.7 467.0 427.1 474.6 438.1 474.6 438.5 473.7 439.2 472.6 439.2 472.6 441.6 475.7 441.6 478.7 441.1 487.6 441.6 487.6 439.5 485.6 438.8 483.7 437.4 473.5 423.1 473.5 422.6 475.7 419.8 478.5 417.0 482.2 414.2 484.6 413.5 484.8 411.6 471.9 411.4 471.9 413.5 473.7 413.7 474.3 414.4 474.3 415.6 471.3 419.3 468.0 422.8 467.0 423.3 466.9 399.2 467.4 395.9 467.2 394.0 465.9 393.8 459.4 395.9ZM513.8 414.4 512.0 412.1 509.2 410.9 506.6 410.9 504.6 411.4 502.9 412.1 500.9 413.7 500.7 411.8 500.2 411.1 499.1 411.1 492.4 413.2 488.8 413.9 488.6 416.0 491.0 417.0 492.3 419.6 492.4 435.3 491.9 437.8 491.0 438.5 488.4 439.5 488.4 441.3 491.0 441.6 493.4 441.1 498.2 441.1 501.3 441.6 506.8 441.6 509.9 441.1 514.5 441.1 516.6 441.6 519.5 441.6 519.3 439.2 517.1 438.5 515.8 437.1 515.5 420.5 514.7 416.7ZM503.3 416.5 505.1 417.0 506.8 418.9 507.7 422.6 507.9 433.4 507.5 437.4 506.4 438.5 504.8 439.2 503.3 439.2 501.1 438.1 500.5 437.4 500.2 433.8 500.2 419.3 501.1 417.4ZM523.8 416.5 522.9 418.1 522.7 420.0 524.0 421.4 525.2 421.9 528.1 421.9 530.0 421.2 530.9 420.0 530.9 418.1 531.5 416.0 532.5 414.9 533.6 414.4 534.8 414.6 536.1 416.0 536.7 418.6 536.7 423.1 536.1 423.8 531.7 424.9 527.7 426.6 525.4 428.0 523.1 430.6 522.3 432.7 522.1 435.3 522.5 437.4 524.2 439.9 526.3 441.3 527.9 441.8 531.9 441.8 534.2 441.1 537.3 439.0 538.6 440.6 540.2 441.6 543.4 441.8 546.3 440.9 549.0 439.0 549.4 437.8 549.4 436.0 547.7 435.7 547.1 436.2 546.3 436.2 545.4 434.8 545.4 420.3 544.6 415.8 542.7 412.8 540.4 411.4 539.0 410.9 533.1 410.9 528.4 412.5 525.4 414.6ZM536.5 427.5 536.5 435.3 534.8 436.9 532.9 436.9 531.3 435.0 530.9 433.1 531.1 431.0 532.9 428.9ZM561.7 411.1 560.5 411.1 555.2 412.8 549.1 413.9 548.9 415.6 551.2 416.3 552.6 417.9 553.0 419.1 553.2 438.5 552.4 444.9 551.2 449.1 549.5 451.9 547.9 453.8 547.1 454.2 547.1 455.2 547.9 456.3 549.5 456.3 555.4 452.6 558.4 449.3 560.3 445.3 561.1 442.3 561.7 437.6 561.7 417.9 562.5 412.1ZM555.2 398.5 553.4 400.4 552.8 402.0 552.8 404.6 553.8 406.7 555.8 408.1 559.1 408.1 560.5 407.4 561.9 405.5 562.3 404.1 562.3 402.2 561.5 400.1 560.5 398.9 559.1 398.2ZM580.3 411.1 568.9 413.9 568.7 415.6 571.1 416.5 572.2 418.1 572.7 421.7 572.7 434.1 572.4 437.6 571.3 438.8 569.1 439.5 569.1 441.6 574.7 441.1 583.9 441.6 584.1 441.1 583.9 439.5 582.8 439.2 581.4 438.3 580.6 436.9 580.4 417.4 581.0 412.1ZM574.2 398.5 572.5 400.4 572.0 402.0 572.0 404.6 572.9 406.7 574.7 408.1 577.7 408.1 579.0 407.4 580.3 405.5 580.6 404.1 580.6 402.2 579.9 400.1 579.0 398.9 577.7 398.2Z"/></svg>
<!-- TEXTS -->
<div class="t" style="left:9.06px;top:33.00px;font-size:10.97px;color:#2a2a2a;transform:scaleX(0.938);transform-origin:0 0;">File</div>
<div class="t" style="left:38.11px;top:33.00px;font-size:10.97px;color:#2a2a2a;transform:scaleX(0.889);transform-origin:0 0;">Edit</div>
<div class="t" style="left:67.60px;top:33.00px;font-size:10.97px;color:#2a2a2a;transform:scaleX(0.900);transform-origin:0 0;">Image</div>
<div class="t" style="left:109.15px;top:33.00px;font-size:10.97px;color:#2a2a2a;transform:scaleX(0.846);transform-origin:0 0;">Layer</div>
<div class="t" style="left:145.15px;top:33.00px;font-size:10.97px;color:#2a2a2a;transform:scaleX(0.850);transform-origin:0 0;">Select</div>
<div class="t" style="left:185.09px;top:33.00px;font-size:10.97px;color:#2a2a2a;transform:scaleX(0.913);transform-origin:0 0;">Filter</div>
<div class="t" style="left:221.00px;top:33.00px;font-size:10.97px;color:#2a2a2a;transform:scaleX(0.854);transform-origin:0 0;">Analysis</div>
<div class="t" style="left:269.08px;top:33.00px;font-size:10.97px;color:#2a2a2a;transform:scaleX(0.923);transform-origin:0 0;">3D</div>
<div class="t" style="left:296.00px;top:33.00px;font-size:10.97px;color:#2a2a2a;transform:scaleX(0.833);transform-origin:0 0;">View</div>
<div class="t" style="left:331.00px;top:33.00px;font-size:10.97px;color:#2a2a2a;transform:scaleX(0.897);transform-origin:0 0;">Window</div>
<div class="t" style="left:380.05px;top:33.00px;font-size:10.97px;color:#2a2a2a;transform:scaleX(0.952);transform-origin:0 0;">Help</div>
<div class="t" style="left:148.46px;top:12.00px;font-size:9.60px;color:#5e5e5e;text-shadow:1px 1px 0 #f2f2f2;transform:scaleX(0.939);transform-origin:0 0;">100%</div>
<div class="t" style="left:343.64px;top:12.00px;font-size:9.60px;font-weight:700;color:#1e1e1e;transform:scaleX(0.956);transform-origin:0 0;">ESSENTIALS</div>
<div class="t" style="left:420.69px;top:12.00px;font-size:9.60px;font-weight:700;color:#1e1e1e;">DESIGN</div>
<div class="t" style="left:476.44px;top:12.00px;font-size:9.60px;font-weight:700;color:#1e1e1e;transform:scaleX(1.057);transform-origin:0 0;">PAINTING</div>
<div class="t" style="left:543.05px;top:12.00px;font-size:9.60px;font-weight:700;color:#1e1e1e;transform:scaleX(0.946);transform-origin:0 0;">PHOTOGRAPHY</div>
<div class="t" style="left:633.80px;top:12.00px;font-size:9.60px;font-weight:700;color:#f4f4f4;">3D</div>
<div class="t" style="left:718.19px;top:12.00px;font-size:10.97px;color:#3a3a3a;transform:scaleX(0.811);transform-origin:0 0;">CS Live</div>
<div class="t" style="left:62.70px;top:61.00px;font-size:9.60px;color:#333;transform:scaleX(0.830);transform-origin:0 0;">65</div>
<div class="t" style="left:129.69px;top:58.00px;font-size:8.23px;color:#222;">Range:</div>
<div class="t" style="left:162.38px;top:58.00px;font-size:8.23px;color:#222;">Midtones</div>
<div class="t" style="left:247.97px;top:58.00px;font-size:8.23px;color:#222;transform:scaleX(1.034);transform-origin:0 0;">Exposure:</div>
<div class="t" style="left:294.40px;top:58.00px;font-size:8.23px;color:#222;">50%</div>
<div class="t" style="left:384.86px;top:58.00px;font-size:8.23px;color:#222;transform:scaleX(1.043);transform-origin:0 0;">Protect Tones</div>
<div class="t" style="left:42.20px;top:81.00px;font-size:8.23px;color:#222;-webkit-text-stroke:0.25px #333;transform:scaleX(1.119);transform-origin:0 0;">5.psd @ 100% (swishschool, RGB/8) *</div>
<div class="t" style="left:42.03px;top:556.00px;font-size:8.23px;color:#222;transform:scaleX(0.970);transform-origin:0 0;">100%</div>
<div class="t" style="left:124.82px;top:554.00px;font-size:7.54px;color:#222;transform:scaleX(1.084);transform-origin:0 0;">Doc: 1.09M/743.8K</div>
<div class="t" style="left:670.10px;top:90.00px;font-size:8.23px;font-weight:700;color:#333;transform:scaleX(0.897);transform-origin:0 0;">LAYERS</div>
<div class="t" style="left:711.00px;top:90.00px;font-size:8.23px;font-weight:700;color:#333;transform:scaleX(0.963);transform-origin:0 0;">PATHS</div>
<div class="t" style="left:669.96px;top:106.50px;font-size:8.23px;color:#222;transform:scaleX(1.040);transform-origin:0 0;">Normal</div>
<div class="t" style="left:765.70px;top:106.00px;font-size:7.82px;color:#222;transform:scaleX(1.089);transform-origin:0 0;">Opacity:</div>
<div class="t" style="left:802.91px;top:106.00px;font-size:7.54px;color:#222;transform:scaleX(1.094);transform-origin:0 0;">100%</div>
<div class="t" style="left:669.47px;top:127.00px;font-size:8.23px;color:#222;transform:scaleX(1.133);transform-origin:0 0;">Lock:</div>
<div class="t" style="left:783.11px;top:127.00px;font-size:7.54px;color:#222;transform:scaleX(1.190);transform-origin:0 0;">Fill:</div>
<div class="t" style="left:802.91px;top:127.00px;font-size:7.54px;color:#222;transform:scaleX(1.094);transform-origin:0 0;">100%</div>
<div class="t" style="left:719.70px;top:151.00px;font-size:8.50px;font-weight:700;color:#fff;transform:scaleX(0.947);transform-origin:0 0;">swishschool</div>
<div class="t" style="left:719.00px;top:177.50px;font-size:8.50px;color:#222;">swishschool</div>
<!-- /TEXTS -->
</body></html>
